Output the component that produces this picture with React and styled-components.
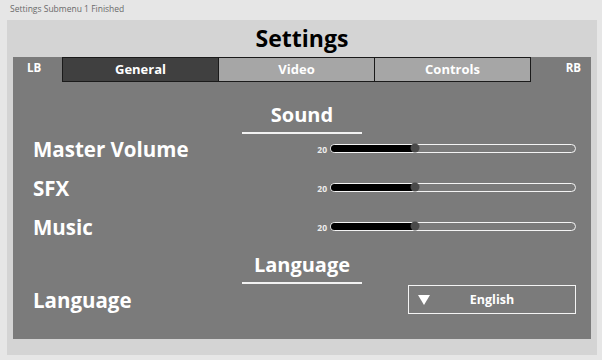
import React from 'react';
import styled, { createGlobalStyle } from 'styled-components';

const GlobalStyle = createGlobalStyle`
  html, body {
    margin: 0;
    padding: 0;
    background: #e6e6e6;
    font-family: 'Open Sans', 'Noto Sans', sans-serif;
  }
`;

const Window = styled.div`
  width: 602px;
  height: 360px;
  display: flex;
  flex-direction: column;
  overflow: hidden;
`;

const Caption = styled.div`
  height: 20px;
  padding-left: 10px;
  font-size: 8.5px;
  line-height: 18px;
  color: #6a6a6a;
`;

const Frame = styled.div`
  margin-left: 7px;
  width: 590px;
  height: 335px;
  box-sizing: border-box;
  background: #d4d4d4;
  padding: 0 6px 16px 6px;
  display: flex;
  flex-direction: column;
`;

const Heading = styled.div`
  height: 37px;
  line-height: 37px;
  text-align: center;
  font-size: 23px;
  font-weight: 700;
  color: #000;
`;

const Panel = styled.div`
  flex: 1;
  background: #7b7b7b;
  display: flex;
  flex-direction: column;
`;

const TabRow = styled.div`
  display: flex;
  height: 25px;
`;

const Bumper = styled.div`
  width: ${(p) => p.w}px;
  color: #fff;
  font-size: 11.5px;
  font-weight: 700;
  line-height: 22px;
  text-align: ${(p) => p.align};
  padding: 0 ${(p) => p.pad}px;
  box-sizing: border-box;
`;

const Tab = styled.div`
  width: 157px;
  box-sizing: border-box;
  border: 1px solid #1a1a1a;
  margin-left: ${(p) => (p.first ? 0 : -1)}px;
  background: ${(p) => (p.active ? '#404040' : '#a6a6a6')};
  color: #fff;
  font-size: 13px;
  font-weight: 700;
  line-height: 23px;
  text-align: center;
`;

const Section = styled.div`
  align-self: center;
  width: 120px;
  margin-top: ${(p) => p.top}px;
  border-bottom: 2px solid #f2f2f2;
  padding-bottom: 5px;
  color: #fff;
  font-size: 20px;
  font-weight: 700;
  line-height: 24px;
  text-align: center;
`;

const Row = styled.div`
  height: ${(p) => p.h}px;
  box-sizing: border-box;
  display: flex;
  align-items: center;
  padding: 0 15px ${(p) => p.pb || 0}px 20px;
`;

const Label = styled.div`
  flex: 1;
  color: #fff;
  font-size: 20.5px;
  font-weight: 700;
`;

const Value = styled.div`
  width: 14px;
  margin-right: 3px;
  text-align: right;
  color: #eee;
  font-size: 8.5px;
  font-weight: 700;
`;

const Track = styled.div`
  position: relative;
  width: 246px;
  height: 9px;
  margin-bottom: 2px;
  box-sizing: border-box;
  border: 1.5px solid #f4f4f4;
  border-radius: 5px;
  background: #7b7b7b;
`;

const Fill = styled.div`
  height: 100%;
  background: #000;
  border-radius: 4px 0 0 4px;
`;

const Knob = styled.div`
  position: absolute;
  top: 50%;
  width: 9px;
  height: 9px;
  border-radius: 50%;
  background: #4a4a4a;
  transform: translate(-50%, -50%);
`;

const Select = styled.div`
  width: 168px;
  height: 29px;
  box-sizing: border-box;
  border: 1.5px solid #f4f4f4;
  display: flex;
  align-items: center;
  padding: 0 21px 0 9px;
  color: #fff;
  font-size: 12.5px;
  font-weight: 700;
`;

const Arrow = styled.div`
  width: 0;
  height: 0;
  border-left: 6.5px solid transparent;
  border-right: 6.5px solid transparent;
  border-top: 10px solid #fff;
`;

const SelectText = styled.div`
  flex: 1;
  text-align: center;
`;

function Slider({ label, value }) {
  const pct = 34.5;
  return (
    <Row h={39} pb={9}>
      <Label>{label}</Label>
      <Value>{value}</Value>
      <Track>
        <Fill style={{ width: `${pct}%` }} />
        <Knob style={{ left: `${pct}%` }} />
      </Track>
    </Row>
  );
}

export default function App() {
  return (
    <Window>
      <GlobalStyle />
      <Caption>Settings Submenu 1 Finished</Caption>
      <Frame>
        <Heading>Settings</Heading>
        <Panel>
          <TabRow>
            <Bumper w={49} align='left' pad={14}>LB</Bumper>
            <Tab first active>General</Tab>
            <Tab>Video</Tab>
            <Tab>Controls</Tab>
            <Bumper w={59} align='right' pad={9}>RB</Bumper>
          </TabRow>
          <Section top={21}>Sound</Section>
          <Slider label='Master Volume' value='20' />
          <Slider label='SFX' value='20' />
          <Slider label='Music' value='20' />
          <Section top={2}>Language</Section>
          <Row h={31}>
            <Label>Language</Label>
            <Select>
              <Arrow />
              <SelectText>English</SelectText>
            </Select>
          </Row>
        </Panel>
      </Frame>
    </Window>
  );
}
